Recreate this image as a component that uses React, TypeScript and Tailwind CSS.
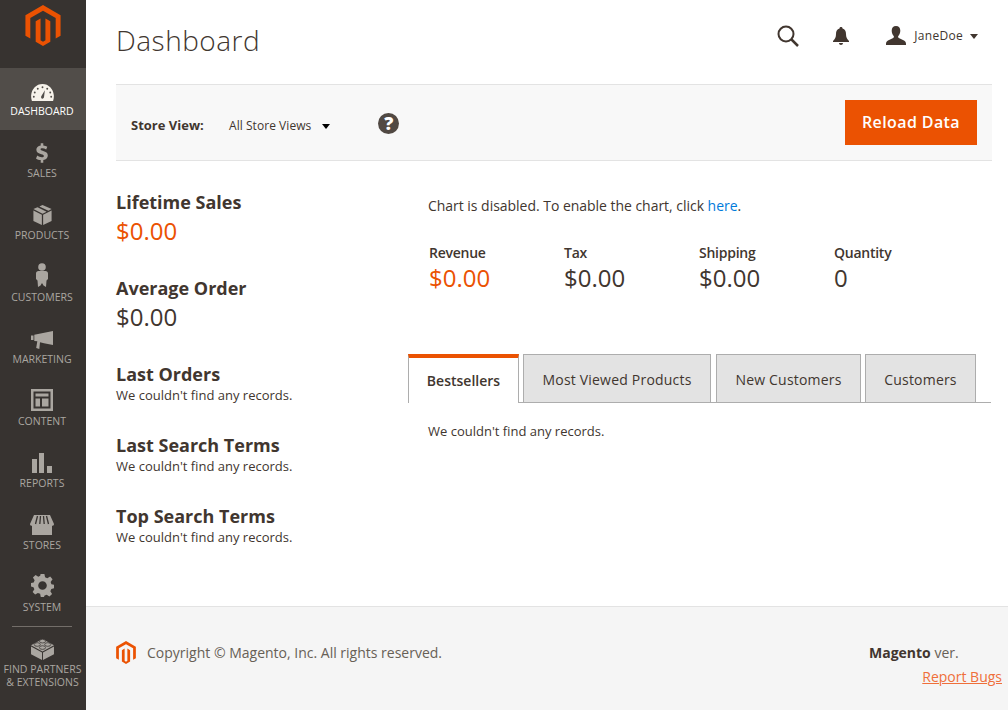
const MagentoLogo = ({ className }: { className?: string }) => (
  <svg viewBox="0 0 36 42" className={className}>
    <path fill="currentColor" d="M18 0 36 10.4V31.4L31 34.3V13.3L18 5.8 5 13.3V34.3L0 31.4V10.4Z" />
    <path fill="currentColor" d="M20.5 10.8 25.5 13.7V34.6L18 39 10.5 34.6V13.7L15.5 10.8V33.2L18 34.7 20.5 33.2Z" transform="translate(0 3)" />
  </svg>
)

const icons: Record<string, React.ReactNode> = {
  dashboard: (
    <svg viewBox="0 0 24 18" className="h-[17px] w-[23px]">
      <path fill="currentColor" d="M12 0C5.4 0 .6 5.2 0 12c-.2 2 .2 4.200 .8 6h22.400c.6-1.800 1-4 .8-6C23.400 5.200 18.600 0 12 0Z" />
      <path fill="#514d49" d="M14.500 6.500 11 12.500c-.8 1-.6 2.200 .2 2.800.9 .6 2-.1 2.400-1.200Z" />
      <circle cx="12" cy="3.500" r="1" fill="#514d49" />
      <circle cx="7" cy="5" r="1" fill="#514d49" />
      <circle cx="17" cy="5" r="1" fill="#514d49" />
      <circle cx="3.800" cy="9" r="1" fill="#514d49" />
      <circle cx="20.200" cy="9" r="1" fill="#514d49" />
      <circle cx="2.800" cy="13.500" r="1" fill="#514d49" />
      <circle cx="21.200" cy="13.500" r="1" fill="#514d49" />
    </svg>
  ),
  sales: (
    <svg viewBox="0 0 14 23" className="h-[20px] w-[12px]">
      <path fill="currentColor" d="M5.500 0h3v2.700c1.900 .2 3.500 .8 4.700 1.600l-1.300 3.200C10.300 6.500 8.900 6 7.400 6 6 6 5.300 6.500 5.300 7.200c0 .9 1 1.300 3 1.900 3.300 1 5.500 2.200 5.500 5.300 0 2.700-1.900 4.700-5.300 5.200V23h-3v-3.200c-2-.2-4-.9-5.500-2L1.500 14.500c1.600 1.200 3.500 2 5.300 2 1.500 0 2.400-.6 2.400-1.500 0-1-1-1.400-3-2C3 12 .4 10.800 .4 7.700 .4 5 2.300 3.200 5.500 2.700Z" />
    </svg>
  ),
  products: (
    <svg viewBox="0 0 20 22" className="h-[20px] w-[19px]">
      <path fill="currentColor" d="M10 0 20 4.500 16.500 6.300 6.500 1.600ZM4.500 2.600 14.500 7.300 10 9.500 0 4.500Z" />
      <path fill="currentColor" d="M0 6 9.300 10.800V22L0 17.500ZM20 6V17.500L10.700 22V10.800Z" />
    </svg>
  ),
  customers: (
    <svg viewBox="0 0 12 24" className="h-[24px] w-[12px]">
      <circle cx="6" cy="4" r="3.800" fill="currentColor" />
      <path fill="currentColor" d="M2.500 8h7c1.500 0 2.500 1 2.500 2.500V16l-1.500 1.500L10 24l-2.500-1.500L6 20l-1.500 2.500L2 24l-.5-6.500L0 16v-5.500C0 9 1 8 2.500 8Z" />
    </svg>
  ),
  marketing: (
    <svg viewBox="0 0 22 18" className="h-[18px] w-[22px]">
      <path fill="currentColor" d="M0 4.500h2.500V9H0ZM3.300 3.700 22 0V14L13 12.200 9 11.300 8.300 18 5.200 17 6.300 10.300 3.300 10Z" />
    </svg>
  ),
  content: (
    <svg viewBox="0 0 22 22" className="h-[22px] w-[22px]">
      <path fill="currentColor" fillRule="evenodd" d="M0 0H22V22H0ZM2.500 2.500V19.500H19.500V2.500ZM4.500 4.500H17.500V7.500H4.500ZM4.500 9.500H9V17.500H4.500ZM11 9.500H17.500V17.500H11Z" />
    </svg>
  ),
  reports: (
    <svg viewBox="0 0 20 20" className="h-[20px] w-[20px]">
      <path fill="currentColor" d="M0 6h5v14H0ZM7 0h5v20H7ZM15 13h5v7h-5Z" />
    </svg>
  ),
  stores: (
    <svg viewBox="0 0 24 20" className="h-[20px] w-[24px]">
      <path fill="currentColor" d="M4 0H20L24 9C24 10.500 22.800 10.800 22 10.800V20H2V10.800C1.200 10.800 0 10.500 0 9Z" />
      <path stroke="#373330" strokeWidth="1.300" d="M7.500 1 5.500 9M10.500 1 9.800 9M13.500 1 14.200 9M16.500 1 18.500 9" />
    </svg>
  ),
  system: (
    <svg viewBox="0 0 24 24" className="h-[23px] w-[23px]">
      <path fill="currentColor" fillRule="evenodd" d="M10 0h4l.7 3.400 2.300 1L20 2.500 22.500 5.500l-2 2.800 .8 2.300 2.700 .7v3.500l-2.800 .8-1 2.300 1.800 2.900-2.800 2.600-2.800-1.800-2.200 .9L13.500 24h-3.300l-.7-3.300-2.300-1-2.900 1.800L1.700 18.800l1.800-2.800-.9-2.300L0 13v-3.500l2.800-.7 1-2.300L2 3.600 4.800 1l2.800 1.800 2-.9ZM12 7.500a4.500 4.500 0 1 0 0 9 4.500 4.500 0 0 0 0-9Z" />
    </svg>
  ),
  partners: (
    <svg viewBox="0 0 24 23" className="h-[22px] w-[23px]">
      <path fill="currentColor" d="M12 1 24 7.500 12 14 0 7.500Z" />
      <path fill="currentColor" d="M0 9 11.500 15.200V23L0 17ZM24 9V17L12.500 23V15.200Z" />
      <g fill="currentColor" stroke="#373330" strokeWidth=".8">
        <ellipse cx="12" cy="3.300" rx="3.200" ry="1.900" />
        <ellipse cx="6.500" cy="6.800" rx="3.200" ry="1.900" />
        <ellipse cx="17.500" cy="6.800" rx="3.200" ry="1.900" />
        <ellipse cx="12" cy="10" rx="3.200" ry="1.900" />
      </g>
    </svg>
  ),
}

const navItems = [
  { key: "dashboard", label: "DASHBOARD", active: true },
  { key: "sales", label: "SALES" },
  { key: "products", label: "PRODUCTS" },
  { key: "customers", label: "CUSTOMERS" },
  { key: "marketing", label: "MARKETING" },
  { key: "content", label: "CONTENT" },
  { key: "reports", label: "REPORTS" },
  { key: "stores", label: "STORES" },
  { key: "system", label: "SYSTEM" },
]

const Sidebar = () => (
  <aside className="flex w-[86px] shrink-0 flex-col bg-[#373330] text-[#aaa6a0]">
    <div className="flex h-[68px] items-start justify-center pt-[5px] text-[#eb5202]">
      <MagentoLogo className="h-[41px] w-[36px]" />
    </div>
    {navItems.map((item) => (
      <div
        key={item.key}
        className={`flex h-[62px] flex-col items-center justify-end pr-[2px] pb-[12px] ${item.active ? "bg-[#514d49] text-[#f7f3eb]" : ""}`}
      >
        {icons[item.key]}
        <span className={`mt-[3px] text-[10.5px] leading-[14px] ${item.active ? "text-white" : ""}`}>{item.label}</span>
      </div>
    ))}
    <div className="mr-[14px] ml-[12px] h-px bg-[#736e69]" />
    <div className="flex flex-col items-center pt-[11px] pr-[1px]">
      {icons.partners}
      <span className="mt-[3px] text-center text-[10.5px] leading-[13px] whitespace-nowrap">
        FIND PARTNERS
        <br />& EXTENSIONS
      </span>
    </div>
  </aside>
)

const Header = () => (
  <header className="flex h-[84px] items-start justify-between pl-[30px]">
    <h1 className="pt-[20px] text-[28px] leading-[40px] font-light tracking-[0.5px] text-[#41362f]">Dashboard</h1>
    <div className="flex items-center pt-[25px] pr-[30px] text-[#41362f]">
      <svg viewBox="0 0 22 22" className="h-[22px] w-[22px]">
        <circle cx="9" cy="9" r="7.500" fill="none" stroke="currentColor" strokeWidth="2" />
        <path stroke="currentColor" strokeWidth="2.500" d="M14.500 14.500 21 21" />
      </svg>
      <svg viewBox="0 0 16 18" className="ml-[34px] h-[18px] w-[16px]">
        <path fill="currentColor" d="M8 0c1 0 1.500 .6 1.500 1.400C12 2 13 4 13 7c0 3.500 1 5 3 7v1H0v-1c2-2 3-3.500 3-7 0-3 1-5 3.500-5.600C6.500 .6 7 0 8 0ZM6 16h4c0 1.200-.9 2-2 2s-2-.8-2-2Z" />
      </svg>
      <svg viewBox="0 0 20 20" className="ml-[37px] h-[20px] w-[20px]">
        <path fill="currentColor" d="M10 0c2.800 0 4.300 2 4.300 4.800 0 2.200-.9 4-2 5.200-.4 .8-.3 1.500 .5 2L18 14.500c1.500 .8 2 2 2 3.500v1H0v-1c0-1.500 .5-2.700 2-3.500L7.200 12c.8-.5 .9-1.200 .5-2-1.100-1.200-2-3-2-5.200C5.700 2 7.200 0 10 0Z" />
      </svg>
      <span className="ml-[8px] text-[12px] leading-[20px] tracking-[0.3px] text-[#41362f]">JaneDoe</span>
      <span className="ml-[7px] h-0 w-0 border-x-[4px] border-t-[5px] border-x-transparent border-t-[#41362f]" />
    </div>
  </header>
)

const StoreBar = () => (
  <div className="mr-[16px] ml-[30px] flex h-[77px] items-center justify-between border-y border-[#e3e3e3] bg-[#f8f8f8] px-[15px]">
    <div className="flex items-center">
      <span className="mt-[6px] w-[98px] text-[13px] font-bold text-[#41362f]">Store View:</span>
      <span className="mt-[6px] text-[12px] tracking-[0.05px] text-[#41362f]">All Store Views</span>
      <span className="mt-[7px] ml-[11px] h-0 w-0 border-x-[4px] border-t-[5px] border-x-transparent border-t-black" />
      <span className="mt-[2px] ml-[48px] flex h-[21px] w-[21px] items-center justify-center rounded-full bg-[#514943] text-[18px] font-extrabold text-white">?</span>
    </div>
    <button className="h-[45px] w-[132px] bg-[#eb5202] pb-[2px] text-[16px] font-semibold tracking-[0.4px] text-white">Reload Data</button>
  </div>
)

const Stat = ({ label, accent }: { label: string; accent?: boolean }) => (
  <div className="mb-[28px]">
    <div className="text-[18px] leading-[24px] font-bold text-[#41362f]">{label}</div>
    <div className={`text-[24px] leading-[34px] ${accent ? "text-[#eb5202]" : "text-[#41362f]"}`}>$0.00</div>
  </div>
)

const EmptyList = ({ label }: { label: string }) => (
  <div className="mb-[29px]">
    <div className="text-[18px] leading-[24px] font-bold text-[#41362f]">{label}</div>
    <div className="text-[13px] leading-[18px] text-[#41362f]">We couldn't find any records.</div>
  </div>
)

const Total = ({ label, value, accent }: { label: string; value: string; accent?: boolean }) => (
  <div className="w-[135px]">
    <div className="text-[14px] leading-[20px] font-semibold tracking-[-0.25px] text-[#41362f]">{label}</div>
    <div className={`text-[24px] leading-[30px] ${accent ? "text-[#eb5202]" : "text-[#41362f]"}`}>{value}</div>
  </div>
)

const tabs = [
  { label: "Most Viewed Products", width: "w-[188px]", gap: "ml-[4px]" },
  { label: "New Customers", width: "w-[145px]", gap: "ml-[5px]" },
  { label: "Customers", width: "w-[111px]", gap: "ml-[4px]" },
]

const Tabs = () => (
  <div className="mr-[1px] flex h-[49px] items-stretch border-b border-[#adadad]">
    <div className="-mb-px w-[111px] border-x border-t-[4px] border-[#adadad] border-t-[#eb5202] bg-white pt-[13px] text-center text-[14px] leading-[20px] font-semibold text-[#41362f]">
      Bestsellers
    </div>
    {tabs.map((tab) => (
      <div
        key={tab.label}
        className={`${tab.width} ${tab.gap} border border-b-0 border-[#adadad] bg-[#e3e3e3] pt-[15px] text-center text-[14px] leading-[20px] tracking-[0.2px] text-[#41362f]`}
      >
        {tab.label}
      </div>
    ))}
  </div>
)

const Footer = () => (
  <footer className="flex h-[104px] items-start justify-between border-t border-[#e3e3e3] bg-[#f5f5f5] pt-[34px] pr-[6px] pl-[30px]">
    <div className="flex items-center">
      <MagentoLogo className="h-[23px] w-[20px] text-[#eb5202]" />
      <span className="ml-[11px] text-[14px] leading-[22px] text-[#676056]">Copyright © Magento, Inc. All rights reserved.</span>
    </div>
    <div className="mt-[1px] flex w-[133px] flex-col text-[14px] leading-[22px] text-[#676056]">
      <div>
        <b className="font-bold text-[#41362f]">Magento</b> ver.
      </div>
      <a className="mt-[2px] self-end text-[#ef6f3a] underline">Report Bugs</a>
    </div>
  </footer>
)

export default function App() {
  return (
    <div className="flex h-[710px] w-[1008px] overflow-hidden bg-white font-['Open_Sans',sans-serif]">
      <Sidebar />
      <main className="flex min-w-0 flex-1 flex-col">
        <Header />
        <StoreBar />
        <div className="flex flex-1 pt-[29px]">
          <div className="w-[322px] shrink-0 pl-[30px]">
            <Stat label="Lifetime Sales" accent />
            <Stat label="Average Order" />
            <EmptyList label="Last Orders" />
            <EmptyList label="Last Search Terms" />
            <EmptyList label="Top Search Terms" />
          </div>
          <div className="w-[584px] shrink-0">
            <p className="pt-[6px] pl-[20px] text-[14px] leading-[20px] tracking-[-0.03px] text-[#41362f]">
              Chart is disabled. To enable the chart, click <a className="text-[#007bdb]">here</a>.
            </p>
            <div className="flex pt-[27px] pl-[21px]">
              <Total label="Revenue" value="$0.00" accent />
              <Total label="Tax" value="$0.00" />
              <Total label="Shipping" value="$0.00" />
              <Total label="Quantity" value="0" />
            </div>
            <div className="pt-[61px]">
              <Tabs />
            </div>
            <p className="pt-[19px] pl-[20px] text-[13px] leading-[18px] text-[#41362f]">We couldn't find any records.</p>
          </div>
        </div>
        <Footer />
      </main>
    </div>
  )
}
